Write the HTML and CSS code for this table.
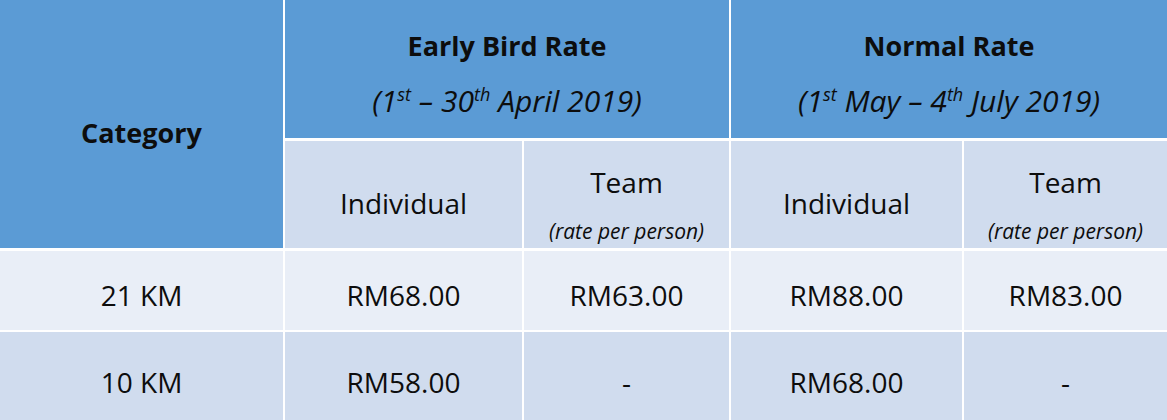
FILE: index.html
```html
<!DOCTYPE html>
<html>
<head>
<meta charset="utf-8">
<link rel="stylesheet" href="styles.css">
</head>
<body>
<table class="rates">
  <colgroup>
    <col class="c1"><col class="c2"><col class="c3"><col class="c4"><col class="c5">
  </colgroup>
  <tr class="r1">
    <th class="cat" rowspan="2">Category</th>
    <th class="period" colspan="2">
      <div class="ptitle">Early Bird Rate</div>
      <div class="pdate">(1<sup>st</sup> – 30<sup>th</sup> April 2019)</div>
    </th>
    <th class="period last" colspan="2">
      <div class="ptitle">Normal Rate</div>
      <div class="pdate">(1<sup>st</sup> May – 4<sup>th</sup> July 2019)</div>
    </th>
  </tr>
  <tr class="r2">
    <td class="sub indiv">Individual</td>
    <td class="sub team"><div class="tname">Team</div><div class="tnote">(rate per person)</div></td>
    <td class="sub indiv">Individual</td>
    <td class="sub team last"><div class="tname">Team</div><div class="tnote">(rate per person)</div></td>
  </tr>
  <tr class="r3 band-light">
    <td>21 KM</td>
    <td>RM68.00</td>
    <td>RM63.00</td>
    <td>RM88.00</td>
    <td class="last">RM83.00</td>
  </tr>
  <tr class="r4 band-dark">
    <td>10 KM</td>
    <td>RM58.00</td>
    <td>-</td>
    <td>RM68.00</td>
    <td class="last">-</td>
  </tr>
</table>
</body>
</html>
```

FILE: styles.css
```css
html, body {
  margin: 0;
  padding: 0;
  background: #ffffff;
}
body {
  width: 1167px;
  height: 420px;
  overflow: hidden;
  font-family: "Open Sans", "Liberation Sans", sans-serif;
  color: #0d0d0d;
}
.rates {
  width: 1167px;
  table-layout: fixed;
  border-collapse: separate;
  border-spacing: 0;
}
.c1 { width: 285px; }
.c2 { width: 239px; }
.c3 { width: 207px; }
.c4 { width: 233px; }
.c5 { width: 203px; }

.rates th, .rates td {
  box-sizing: border-box;
  padding: 0;
  text-align: center;
  vertical-align: top;
  border-right: 2px solid #ffffff;
  border-bottom: 2px solid #ffffff;
  font-weight: normal;
}
.rates .last { border-right: none; }

.r1 th {
  background: #5b9bd5;
  border-bottom-width: 3px;
}
.r1 { height: 141px; }
.r2 { height: 110px; }
.r3 { height: 81px; }
.r4 { height: 100px; }

.cat {
  font-weight: 700 !important;
  font-size: 27px;
  line-height: 34px;
  padding-top: 116px !important;
  border-bottom-width: 3px !important;
}
.ptitle {
  font-weight: 700;
  font-size: 27px;
  line-height: 34px;
  padding-top: 29px;
}
.pdate {
  font-style: italic;
  font-size: 30px;
  line-height: 38px;
  padding-top: 19px;
}
sup {
  font-size: 0.6em;
  line-height: 0;
  vertical-align: 0.6em;
}

.r2 td {
  background: #d0dcee;
  border-bottom-width: 3px;
}
.indiv {
  font-size: 28px;
  line-height: 34px;
  padding-top: 45px !important;
}
.tname {
  font-size: 28px;
  line-height: 34px;
  padding-top: 24px;
}
.tnote {
  font-style: italic;
  font-size: 21px;
  line-height: 28px;
  padding-top: 18px;
}

.band-light td {
  background: #e9eef7;
  font-size: 28px;
  line-height: 34px;
  padding-top: 27px;
}
.band-dark td {
  background: #d0dcee;
  font-size: 28px;
  line-height: 34px;
  padding-top: 33px;
}
```
